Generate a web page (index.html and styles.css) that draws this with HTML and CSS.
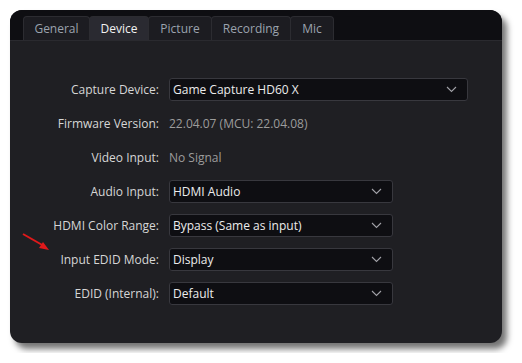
FILE: index.html
```html
<!DOCTYPE html>
<html lang="en">
<head>
    <meta charset="UTF-8">
    <title>Device settings</title>
    <link rel="stylesheet" href="styles.css">
</head>
<body>
    <div class="window">
        <div class="tabs">
            <div class="tab tab-general">General</div>
            <div class="tab tab-device active">Device</div>
            <div class="tab tab-picture">Picture</div>
            <div class="tab tab-recording">Recording</div>
            <div class="tab tab-mic">Mic</div>
        </div>

        <div class="panel">
            <div class="form">
                <label class="label">Capture Device:</label>
                <div class="select wide">
                    <span>Game Capture HD60 X</span>
                    <svg class="chevron" width="11" height="7" viewBox="0 0 11 7"><polyline points="1,1 5.5,5.5 10,1"/></svg>
                </div>

                <label class="label">Firmware Version:</label>
                <div class="value">22.04.07 (MCU: 22.04.08)</div>

                <label class="label">Video Input:</label>
                <div class="value">No Signal</div>

                <label class="label">Audio Input:</label>
                <div class="select">
                    <span>HDMI Audio</span>
                    <svg class="chevron" width="11" height="7" viewBox="0 0 11 7"><polyline points="1,1 5.5,5.5 10,1"/></svg>
                </div>

                <label class="label">HDMI Color Range:</label>
                <div class="select">
                    <span>Bypass (Same as input)</span>
                    <svg class="chevron" width="11" height="7" viewBox="0 0 11 7"><polyline points="1,1 5.5,5.5 10,1"/></svg>
                </div>

                <label class="label marked">
                    <svg class="arrow" width="30" height="20" viewBox="0 0 30 20">
                        <line x1="1" y1="1" x2="22" y2="13"/>
                        <polygon points="27,17 17,15 21,9"/>
                    </svg>
                    Input EDID Mode:
                </label>
                <div class="select">
                    <span>Display</span>
                    <svg class="chevron" width="11" height="7" viewBox="0 0 11 7"><polyline points="1,1 5.5,5.5 10,1"/></svg>
                </div>

                <label class="label">EDID (Internal):</label>
                <div class="select">
                    <span>Default</span>
                    <svg class="chevron" width="11" height="7" viewBox="0 0 11 7"><polyline points="1,1 5.5,5.5 10,1"/></svg>
                </div>
            </div>
        </div>
    </div>
</body>
</html>
```

FILE: styles.css
```css
/* Page */
body {
    margin: 0;
    padding: 10px;
    background: #fff;
    font-family: 'Open Sans', 'Noto Sans', sans-serif;
    font-size: 12px;
}

/* Window */
.window {
    width: 492px;
    height: 333px;
    border-radius: 12px;
    overflow: hidden;
    background: #1f1f23;
    box-shadow: 5px 6px 6px rgba(0, 0, 0, 0.55);
    display: flex;
    flex-direction: column;
}

/* Tabs */
.tabs {
    height: 31px;
    background: #0e0e12;
    display: flex;
    align-items: flex-end;
    padding-left: 13px;
    border-bottom: 1px solid #2a2a2f;
    box-sizing: border-box;
}

.tab {
    height: 24px;
    line-height: 24px;
    box-sizing: border-box;
    text-align: center;
    color: #9ba3ae;
    background: #1c1c21;
    border: 1px solid #2c2c31;
    border-bottom: none;
    border-radius: 4px 4px 0 0;
    margin-right: -1px;
}

.tab.active {
    color: #f2f2f2;
    background: #2a2a31;
}

.tab-general { width: 67px; }
.tab-device { width: 60px; }
.tab-picture { width: 64px; }
.tab-recording { width: 80px; }
.tab-mic { width: 44px; }

/* Form */
.panel {
    flex: 1;
    padding-top: 37px;
}

.form {
    display: grid;
    grid-template-columns: 149px auto;
    column-gap: 10px;
    row-gap: 11px;
    align-items: center;
    justify-items: start;
}

.label {
    justify-self: end;
    color: #d6d6d6;
    line-height: 23px;
    position: relative;
}

.value {
    color: #9c9c9c;
    line-height: 23px;
}

.select {
    width: 224px;
    height: 23px;
    box-sizing: border-box;
    background: #0e0e12;
    border: 1px solid #38383e;
    border-radius: 3px;
    color: #ececec;
    display: flex;
    align-items: center;
    justify-content: space-between;
    padding: 0 10px 0 3px;
}

.select.wide {
    width: 299px;
}

.chevron polyline {
    fill: none;
    stroke: #a0a0a6;
    stroke-width: 1.1;
}

/* Red pointer */
.arrow {
    position: absolute;
    left: -38px;
    top: -15px;
}

.arrow line {
    stroke: #e0191b;
    stroke-width: 2;
}

.arrow polygon {
    fill: #e0191b;
}
```
